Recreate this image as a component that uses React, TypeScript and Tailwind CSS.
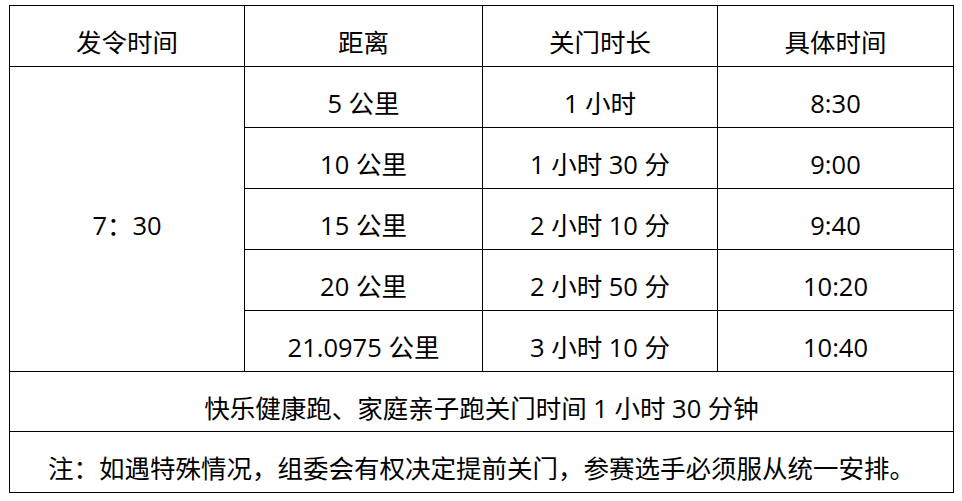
const rows = [
  { distance: '5 公里', limit: '1 小时', time: '8:30' },
  { distance: '10 公里', limit: '1 小时 30 分', time: '9:00' },
  { distance: '15 公里', limit: '2 小时 10 分', time: '9:40' },
  { distance: '20 公里', limit: '2 小时 50 分', time: '10:20' },
  { distance: '21.0975 公里', limit: '3 小时 10 分', time: '10:40' },
];

const cell = 'border border-black text-center align-middle pt-[13px] p-0';

export default function App() {
  return (
    <div
      className="w-[962px] h-[501px] bg-white pt-[5px] pl-[9px] text-[25.5px] text-black"
      style={{ fontFamily: '"Open Sans", "Noto Sans CJK SC", sans-serif' }}
    >
      <table className="border-collapse table-fixed w-[944px]">
        <colgroup>
          <col className="w-[235px]" />
          <col className="w-[238px]" />
          <col className="w-[235px]" />
          <col className="w-[236px]" />
        </colgroup>
        <tbody>
          <tr className="h-[61px]">
            <td className={cell}>发令时间</td>
            <td className={cell}>距离</td>
            <td className={cell}>关门时长</td>
            <td className={cell}>具体时间</td>
          </tr>
          {rows.map((r, i) => (
            <tr key={r.time} className="h-[61px]">
              {i === 0 && (
                <td className={cell} rowSpan={5}>
                  7：30
                </td>
              )}
              <td className={cell}>{r.distance}</td>
              <td className={cell}>{r.limit}</td>
              <td className={cell}>{r.time}</td>
            </tr>
          ))}
          <tr className="h-[60px]">
            <td className={cell} colSpan={4}>
              快乐健康跑、家庭亲子跑关门时间 1 小时 30 分钟
            </td>
          </tr>
          <tr className="h-[61px]">
            <td className={cell} colSpan={4}>
              注：如遇特殊情况，组委会有权决定提前关门，参赛选手必须服从统一安排。
            </td>
          </tr>
        </tbody>
      </table>
    </div>
  );
}
